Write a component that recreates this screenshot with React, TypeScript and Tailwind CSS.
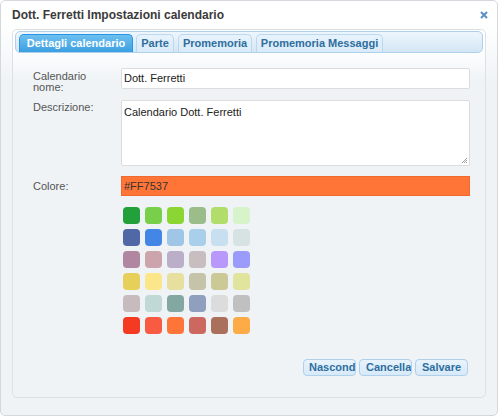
import React from 'react'

const SWATCHES: string[][] = [
  ['#22a03a', '#78cf4a', '#8cd633', '#9bbd8a', '#b1dd6b', '#d7f3c9'],
  ['#5168a6', '#4486e6', '#9fc6e6', '#aacfea', '#c8dff0', '#d6e3e2'],
  ['#b086a0', '#cba4ac', '#bbaec8', '#c8bdbf', '#b998fc', '#9b9bfc'],
  ['#e7d05a', '#fbe78a', '#e7df9e', '#c6c4a8', '#cbc996', '#e0e49c'],
  ['#c8bbbd', '#c0d9d6', '#83a8a2', '#8f9fbd', '#dcdcdc', '#c0c0c0'],
  ['#f53a22', '#f95a42', '#fe7537', '#cd6860', '#ab705c', '#fdab47'],
]

const TABS = [
  { label: 'Dettagli calendario', w: 'w-[114px]' },
  { label: 'Parte', w: 'w-[38px] ml-[3px]' },
  { label: 'Promemoria', w: 'w-[74px] ml-[4px]' },
  { label: 'Promemoria Messaggi', w: 'w-[127px] ml-[4px]' },
]

const BUTTONS = [
  { label: 'Nascondere', cls: 'justify-start pl-[5px]' },
  { label: 'Cancellare', cls: 'justify-start pl-[6px]' },
  { label: 'Salvare', cls: 'justify-center' },
]

const font = { fontFamily: '"Liberation Sans", Arial, sans-serif' }

export default function App() {
  return (
    <div className="w-[500px] h-[417px] bg-white" style={font}>
      <div className="w-[498px] h-[416px] border border-[#d4d8dc] rounded-[5px] bg-gradient-to-b from-white from-[5%] to-[#eff3f6] to-[20%] flex flex-col">
        {/* Header */}
        <div className="h-[28px] pl-[11px] pr-[9px] flex items-center justify-between">
          <span className="text-[12px] font-bold text-[#3a3a3a]">
            Dott. Ferretti Impostazioni calendario
          </span>
          <svg width="8" height="8" viewBox="0 0 8 8">
            <path d="M1 1 L7 7 M7 1 L1 7" stroke="#5b8dc6" strokeWidth="2" />
          </svg>
        </div>

        {/* Panel */}
        <div className="mx-[11px] h-[369px] border border-[#dde1e5] rounded-[5px] bg-gradient-to-b from-white from-[5%] to-[#eff3f6] to-[14%] p-[1px] flex flex-col">
          {/* Tab bar */}
          <div className="h-[22px] mx-[1px] border border-[#aed0ea] rounded-[5px] bg-gradient-to-b from-[#eef6fd] to-[#d3e6f5] flex items-end pl-[3px]">
            {TABS.map((t, i) =>
              i === 0 ? (
                <div
                  key={t.label}
                  className={`${t.w} h-[18px] rounded-t-[5px] border border-b-0 border-[#2694e8] bg-gradient-to-b from-[#6ec0ee] to-[#3a9fe2] text-white text-[11px] font-bold flex items-center justify-center`}
                >
                  {t.label}
                </div>
              ) : (
                <div
                  key={t.label}
                  className={`${t.w} h-[18px] rounded-t-[5px] border border-b-0 border-[#bcd8ee] bg-gradient-to-b from-[#e8f3fc] to-[#d9eaf8] text-[#2e6e9e] text-[11px] font-bold flex items-center justify-center`}
                >
                  {t.label}
                </div>
              ),
            )}
          </div>

          {/* Form */}
          <div className="pl-[19px] pt-[15px] flex flex-col text-[11px] text-[#555]">
            <div className="grid grid-cols-[88px_349px]">
              <div className="pt-[3px] leading-[11px] w-[70px]">Calendario nome:</div>
              <div className="h-[21px] bg-white border border-[#dcdcdc] rounded-[2px] flex items-center px-[2px] text-[#222]">
                Dott. Ferretti
              </div>
            </div>
            <div className="grid grid-cols-[88px_349px] mt-[7px]">
              <div className="leading-[11px] pt-[2px]">Descrizione:</div>
              <div className="h-[66px] bg-white border border-[#dcdcdc] rounded-[2px] px-[2px] pt-[3px] text-[#222] relative">
                Calendario Dott. Ferretti
                <svg width="7" height="7" viewBox="0 0 7 7" className="absolute right-[1px] bottom-[1px]">
                  <path d="M6 1 L1 6 M6 3 L3 6 M6 5 L5 6" stroke="#888" strokeWidth="0.8" />
                </svg>
              </div>
            </div>
            <div className="grid grid-cols-[88px_349px] mt-[10px]">
              <div className="flex items-center">Colore:</div>
              <div className="h-[20px] bg-[#ff7537] border border-[#ef6a2e] flex items-center px-[2px] text-[#333] text-[11px]">
                #FF7537
              </div>
            </div>

            {/* Swatches */}
            <div className="ml-[90px] mt-[11px] flex flex-col gap-[5px]">
              {SWATCHES.map((row, r) => (
                <div key={r} className="flex gap-[5px]">
                  {row.map(c => (
                    <div key={c} className="w-[17px] h-[17px] rounded-[4px]" style={{ backgroundColor: c }} />
                  ))}
                </div>
              ))}
            </div>
          </div>

          {/* Buttons */}
          <div className="mt-[25px] pr-[16px] flex justify-end gap-[3px]">
            {BUTTONS.map(b => (
              <div
                key={b.label}
                className={`w-[53px] h-[17px] rounded-[4px] border border-[#aed0ea] bg-gradient-to-b from-[#e8f3fc] to-[#d7e9f8] text-[#2e6e9e] text-[11px] font-bold flex items-center overflow-hidden whitespace-nowrap ${b.cls}`}
              >
                {b.label}
              </div>
            ))}
          </div>
        </div>
      </div>
    </div>
  )
}
